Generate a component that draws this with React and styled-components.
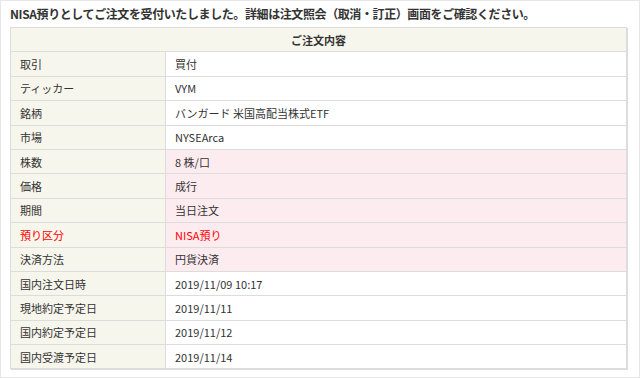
import styled, { createGlobalStyle } from 'styled-components';

const GlobalStyle = createGlobalStyle`
  html, body {
    margin: 0;
    padding: 0;
    background: #fff;
  }
  body {
    font-family: "Noto Sans CJK JP", "Noto Sans", sans-serif;
    color: #333;
  }
`;

const rows = [
  { label: '取引', value: '買付' },
  { label: 'ティッカー', value: 'VYM' },
  { label: '銘柄', value: 'バンガード 米国高配当株式ETF' },
  { label: '市場', value: 'NYSEArca' },
  { label: '株数', value: '8 株/口', pink: true },
  { label: '価格', value: '成行', pink: true },
  { label: '期間', value: '当日注文', pink: true },
  { label: '預り区分', value: 'NISA預り', pink: true, red: true },
  { label: '決済方法', value: '円貨決済', pink: true },
  { label: '国内注文日時', value: '2019/11/09 10:17' },
  { label: '現地約定予定日', value: '2019/11/11' },
  { label: '国内約定予定日', value: '2019/11/12' },
  { label: '国内受渡予定日', value: '2019/11/14' },
];

function App() {
  return (
    <>
      <GlobalStyle />
      <Frame>
        <Message>
          NISA預りとしてご注文を受付いたしました。詳細は注文照会（取消・訂正）画面をご確認ください。
        </Message>
        <OrderTable>
          <colgroup>
            <LabelCol />
            <col />
          </colgroup>
          <thead>
            <tr>
              <HeadCell colSpan={2}>ご注文内容</HeadCell>
            </tr>
          </thead>
          <tbody>
            {rows.map((r) => (
              <tr key={r.label}>
                <LabelCell $red={r.red}>{r.label}</LabelCell>
                <ValueCell $pink={r.pink} $red={r.red}>
                  {r.value}
                </ValueCell>
              </tr>
            ))}
          </tbody>
        </OrderTable>
      </Frame>
    </>
  );
}

const Frame = styled('div')`
  box-sizing: border-box;
  width: 640px;
  height: 378px;
  border: 1px solid #e6e6e6;
  padding: 5px 12px 0 9px;
`;

const Message = styled('div')`
  font-size: 12px;
  font-weight: bold;
  line-height: 16px;
  letter-spacing: -0.4px;
  color: #333;
  white-space: nowrap;
  margin-bottom: 5px;
`;

const OrderTable = styled('table')`
  width: 617px;
  border-collapse: collapse;
  border: 1px solid #d9d9d9;
  box-shadow: 1px 1px 0 #dcdcdc;
  font-size: 11px;
  table-layout: fixed;

  td,
  th {
    height: 24.4px;
    padding: 0 9px;
    border: 1px solid #dcdcdc;
    box-sizing: border-box;
  }
`;

const LabelCol = styled('col')`
  width: 155px;
`;

const HeadCell = styled('th')`
  background: #f7f6ec;
  font-weight: bold;
  text-align: center;
  color: #333;
`;

const LabelCell = styled('td')`
  background: #f7f6ec;
  color: ${(p) => (p.$red ? '#f00' : '#333')};
`;

const ValueCell = styled('td')`
  background: ${(p) => (p.$pink ? '#fdecef' : '#fff')};
  color: ${(p) => (p.$red ? '#f00' : '#333')};
`;

export default App;
